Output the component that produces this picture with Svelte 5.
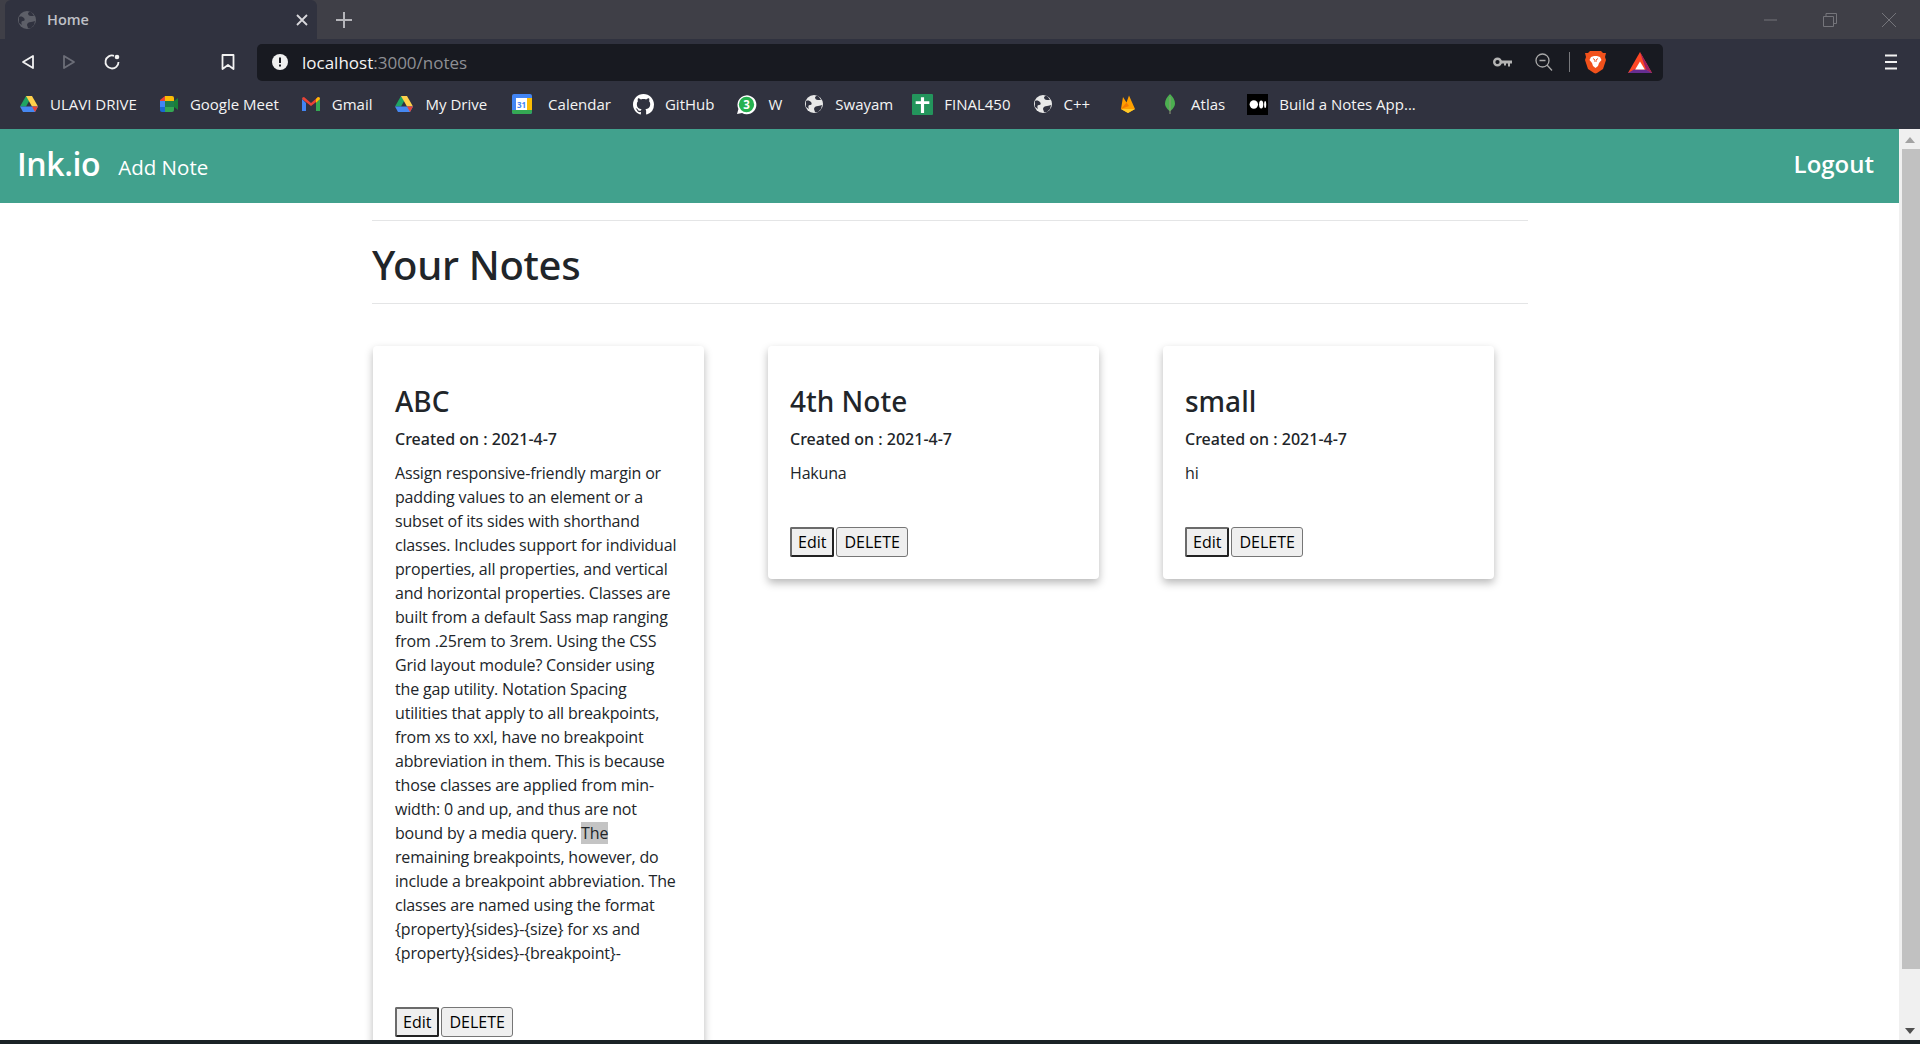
<script>
  const bookmarks = [
    { icon: 'drive', label: 'ULAVI DRIVE' },
    { icon: 'meet', label: 'Google Meet' },
    { icon: 'gmail', label: 'Gmail' },
    { icon: 'drive', label: 'My Drive' },
    { icon: 'calendar', label: 'Calendar' },
    { icon: 'github', label: 'GitHub' },
    { icon: 'whatsapp', label: 'W' },
    { icon: 'globe', label: 'Swayam' },
    { icon: 'sheet', label: 'FINAL450' },
    { icon: 'globe', label: 'C++' },
    { icon: 'firebase', label: '' },
    { icon: 'leaf', label: 'Atlas' },
    { icon: 'medium', label: 'Build a Notes App...' }
  ];

  const notes = [
    {
      title: 'ABC',
      lines: [
        'Assign responsive-friendly margin or',
        'padding values to an element or a',
        'subset of its sides with shorthand',
        'classes. Includes support for individual',
        'properties, all properties, and vertical',
        'and horizontal properties. Classes are',
        'built from a default Sass map ranging',
        'from .25rem to 3rem. Using the CSS',
        'Grid layout module? Consider using',
        'the gap utility. Notation Spacing',
        'utilities that apply to all breakpoints,',
        'from xs to xxl, have no breakpoint',
        'abbreviation in them. This is because',
        'those classes are applied from min-',
        'width: 0 and up, and thus are not',
        'bound by a media query. |The',
        'remaining breakpoints, however, do',
        'include a breakpoint abbreviation. The',
        'classes are named using the format',
        '{property}{sides}-{size} for xs and',
        '{property}{sides}-{breakpoint}-'
      ]
    },
    { title: '4th Note', lines: ['Hakuna'] },
    { title: 'small', lines: ['hi'] }
  ];
</script>

{#snippet globe()}
  <svg viewBox="0 0 20 20" width="20" height="20">
    <circle cx="10" cy="10" r="9" fill="currentColor" />
    <path d="M2 7c2-1 4 0 5 1s1 3-1 3-2 2-1 4l-3-2zM11 18l-1-3c0-2 2-3 4-3s3-1 4-1l-1 4-3 3zM11 3c0 2 1 3 3 3l3 0-2-3-2-1.500z" fill="#30323f" />
  </svg>
{/snippet}

{#snippet icon(name)}
  {#if name === 'drive'}
    <svg viewBox="0 0 20 20" width="20" height="20">
      <path d="M7 2h6l-6 10.500H1z" fill="#1fa463" />
      <path d="M7 2h6l6 10.500h-6z" fill="#ffd04b" />
      <path d="M1 12.500 4 18h12l3-5.500z" fill="#4688f1" />
      <path d="M13 12.500h6L16 18z" fill="#ea4335" />
    </svg>
  {:else if name === 'meet'}
    <svg viewBox="0 0 20 20" width="20" height="20">
      <path d="M1 6 6 2v5H1z" fill="#ea4335" />
      <path d="M1 7h5v6H1z" fill="#4285f4" />
      <path d="M1 13h5v5H3q-2 0-2-2z" fill="#1967d2" />
      <path d="M6 2h7q2 0 2 2v3H6z" fill="#fbbc04" />
      <path d="M6 13h9v3q0 2-2 2H6z" fill="#34a853" />
      <path d="M15 7v6l4 3V4z" fill="#188038" />
      <path d="M6 7h9v6H6z" fill="#1e7e4a" />
    </svg>
  {:else if name === 'gmail'}
    <svg viewBox="0 0 20 20" width="20" height="20">
      <path d="M1 5v12h4V9z" fill="#4285f4" />
      <path d="M15 9v8h4V5z" fill="#34a853" />
      <path d="M1 5q0-2 2-2l7 6 7-6q2 0 2 2l-9 7z" fill="#ea4335" />
      <path d="M15 5l2-2q2 0 2 2l-4 4z" fill="#fbbc04" />
    </svg>
  {:else if name === 'calendar'}
    <svg viewBox="0 0 20 20" width="20" height="20">
      <rect width="20" height="20" rx="2" fill="#4285f4" />
      <path d="M15 4h5v12h-5z" fill="#fbbc04" />
      <path d="M0 16h20v2q0 2-2 2H2q-2 0-2-2z" fill="#34a853" />
      <path d="M4 4h11v12H4z" fill="#fff" />
      <text x="9.500" y="13.500" class="cal-num">31</text>
    </svg>
  {:else if name === 'github'}
    <svg viewBox="0 0 16 16" width="21" height="21">
      <path fill="#fff" d="M8 0C3.580 0 0 3.580 0 8c0 3.540 2.290 6.530 5.470 7.590.4.070.55-.17.55-.38 0-.19-.01-.82-.01-1.490-2.010.37-2.530-.49-2.690-.94-.09-.23-.48-.94-.82-1.130-.28-.15-.68-.52-.01-.53.63-.01 1.080.58 1.230.82.720 1.210 1.870.870 2.330.660.070-.520.280-.870.510-1.070-1.780-.200-3.640-.890-3.640-3.950 0-.870.310-1.590.820-2.150-.080-.200-.360-1.020.080-2.120 0 0 .670-.210 2.200.820.640-.180 1.320-.270 2-.270s1.360.090 2 .270c1.530-1.040 2.200-.820 2.200-.820.440 1.100.160 1.920.080 2.120.510.560.820 1.270.820 2.150 0 3.070-1.870 3.750-3.650 3.950.290.250.540.730.540 1.480 0 1.070-.010 1.930-.010 2.200 0 .210.150.460.550.380A8.010 8.010 0 0 0 16 8c0-4.420-3.580-8-8-8z" />
    </svg>
  {:else if name === 'whatsapp'}
    <svg viewBox="0 0 20 20" width="21" height="21">
      <path d="M1 19l1.300-4.800A9 9 0 1 1 5.800 18z" fill="#fff" />
      <circle cx="10" cy="10" r="7.300" fill="#25b14f" />
      <text x="10" y="14" class="wa-num">3</text>
    </svg>
  {:else if name === 'globe'}
    {@render globe()}
  {:else if name === 'sheet'}
    <svg viewBox="0 0 20 20" width="21" height="21">
      <rect width="20" height="20" rx="1" fill="#23955c" />
      <path d="M8.500 3h3v4h5v2.500h-5V18h-3V9.500h-5V7h5z" fill="#fff" />
    </svg>
  {:else if name === 'firebase'}
    <svg viewBox="0 0 20 20" width="20" height="20">
      <path d="M3 15 5 3l3.500 5.500L11 1.500 17 15l-7 4z" fill="#ffa000" />
      <path d="M3 15 8.500 8.500 11 12l-8 3z" fill="#f57c00" />
      <path d="M3 15l14 0-7 4z" fill="#ffca28" />
    </svg>
  {:else if name === 'leaf'}
    <svg viewBox="0 0 20 20" width="20" height="20">
      <path d="M10 0c3 3 5 6 5 9.500 0 3.500-3 6-4.600 7.500h-.8C8 15.500 5 13 5 9.500 5 6 7 3 10 0z" fill="#4caf50" />
      <path d="M10 3v17" stroke="#8d9a7a" stroke-width="1" />
    </svg>
  {:else if name === 'medium'}
    <svg viewBox="0 0 20 20" width="21" height="21">
      <rect width="20" height="20" fill="#000" />
      <circle cx="6.500" cy="10" r="4" fill="#fff" />
      <ellipse cx="13.500" cy="10" rx="2" ry="3.800" fill="#fff" />
      <ellipse cx="17.300" cy="10" rx="1" ry="3.400" fill="#fff" />
    </svg>
  {/if}
{/snippet}

<div class="window">
  <div class="tabstrip">
    <div class="tab">
      <span class="tab-globe">{@render globe()}</span>
      <span class="tab-title">Home</span>
      <svg class="tab-close" viewBox="0 0 12 12" width="12" height="12">
        <path d="M1 1l10 10M11 1 1 11" stroke="#d8d8dc" stroke-width="1.800" />
      </svg>
    </div>
    <svg class="new-tab" viewBox="0 0 16 16" width="16" height="16">
      <path d="M8 0v16M0 8h16" stroke="#b5b5ba" stroke-width="2" />
    </svg>
    <div class="win-controls">
      <svg viewBox="0 0 14 14" width="14" height="14"><path d="M0 7h13" stroke="#75757b" stroke-width="1" /></svg>
      <svg viewBox="0 0 14 14" width="14" height="14" fill="none" stroke="#75757b"><path d="M.5 3.500h10v10H.5zM3 3.500V.5h10.500v10H10.500" /></svg>
      <svg viewBox="0 0 14 14" width="14" height="14"><path d="M0 0l14 14M14 0 0 14" stroke="#75757b" stroke-width="1" /></svg>
    </div>
  </div>

  <div class="toolbar">
    <div class="nav-btns">
      <svg viewBox="0 0 14 16" width="14" height="16"><path d="M12 2v12L2 8z" fill="none" stroke="#f2f2f2" stroke-width="1.800" stroke-linejoin="round" /></svg>
      <svg viewBox="0 0 14 16" width="14" height="16"><path d="M2 2v12l10-6z" fill="none" stroke="#6c6e78" stroke-width="1.800" stroke-linejoin="round" /></svg>
      <svg viewBox="0 0 18 18" width="18" height="18"><path d="M15.500 9A6.500 6.500 0 1 1 11 2.800" fill="none" stroke="#f2f2f2" stroke-width="1.800" /><circle cx="14" cy="4" r="2.300" fill="#f2f2f2" /></svg>
    </div>
    <svg class="bookmark-btn" viewBox="0 0 14 16" width="14" height="16"><path d="M1.500 1h11v14L7 11l-5.500 4z" fill="none" stroke="#f2f2f2" stroke-width="1.800" stroke-linejoin="round" /></svg>
    <div class="addressbar">
      <svg class="info" viewBox="0 0 16 16" width="16" height="16"><circle cx="8" cy="8" r="8" fill="#f0f0f0" /><path d="M8 3.500v5.500M8 10.500v2" stroke="#181a21" stroke-width="2" /></svg>
      <span class="url"><span class="host">localhost</span>:3000/notes</span>
      <div class="addr-right">
        <svg viewBox="0 0 20 12" width="20" height="12"><circle cx="4.500" cy="6" r="3.300" fill="none" stroke="#b4b4b4" stroke-width="2.400" /><path d="M8 4.500h11v3h-2v3h-2v-3h-2v2h-2v-2H8z" fill="#b4b4b4" /></svg>
        <svg class="zoom" viewBox="0 0 18 18" width="18" height="18"><circle cx="7.500" cy="7.500" r="6.500" fill="none" stroke="#a8a8a8" stroke-width="1.300" /><path d="M12 12l5 5.500M4.500 7.500h6" stroke="#a8a8a8" stroke-width="1.300" /></svg>
        <span class="addr-sep"></span>
        <svg class="brave" viewBox="0 0 21 24" width="21" height="24">
          <path d="M5 1h11l2 2 3 0-1 4 1 3-3 9-6 4-1.500.5L9 23 3 19 0 10l1-3-1-4 3 0z" fill="#f1511b" />
          <path d="M6 7l3-1h3l3 1 1.500 3-2.500 3-1 3-2.500 2L8 16l-1-3-2.500-3z" fill="#fff" />
          <path d="M9 11h3M8 8.500l2 1.500M13 8.500l-2 1.500" stroke="#f1511b" stroke-width="1" />
        </svg>
        <svg class="bat" viewBox="0 0 24 21" width="24" height="21">
          <path d="M12 0 24 21H0z" fill="#ff4724" />
          <path d="M12 0 24 21l-6-3.500z" fill="#9e1f63" />
          <path d="M0 21l6-3.500h12L24 21z" fill="#662d91" />
          <path d="M12 9.500l4.800 8H7.200z" fill="#fff" />
        </svg>
      </div>
    </div>
    <svg class="menu" viewBox="0 0 12 16" width="12" height="16"><path d="M0 1.500h12M0 8h12M0 14.500h12" stroke="#f2f2f2" stroke-width="2" /></svg>
  </div>

  <div class="bookmarks">
    {#each bookmarks as b}
      <div class="bm">
        <span
          class="bm-icon"
          class:light={b.icon === 'globe'}
          class:wide={b.icon === 'calendar'}
          class:sheet={b.icon === 'sheet'}
          class:fire={b.icon === 'firebase'}
        >{@render icon(b.icon)}</span>
        {#if b.label}<span class="bm-label">{b.label}</span>{/if}
      </div>
    {/each}
  </div>

  <div class="viewport">
    <div class="page">
      <nav class="navbar">
        <a class="brand" href="/">Ink.io</a>
        <a class="nav-link" href="/notes/add">Add Note</a>
        <a class="logout" href="/logout">Logout</a>
      </nav>
      <main class="container">
        <hr />
        <h1>Your Notes</h1>
        <hr />
        <div class="cards">
          {#each notes as note}
            <article class="card">
              <h2>{note.title}</h2>
              <h6>Created on : 2021-4-7</h6>
              <p>
                {#each note.lines as line}
                  <span class="line">
                    {#if line.includes('|')}
                      {line.split('|')[0]}<mark>{line.split('|')[1]}</mark>
                    {:else}
                      {line}
                    {/if}
                  </span>
                {/each}
              </p>
              <div class="actions">
                <button class="focused">Edit</button>
                <button>DELETE</button>
              </div>
            </article>
          {/each}
        </div>
      </main>
    </div>
    <div class="scrollbar">
      <svg viewBox="0 0 10 6" width="10" height="6"><path d="M0 6 5 0l5 6z" fill="#a3a3a3" /></svg>
      <div class="track"><div class="thumb"></div></div>
      <svg viewBox="0 0 10 6" width="10" height="6"><path d="M0 0l5 6 5-6z" fill="#505050" /></svg>
    </div>
  </div>
  <div class="taskbar"></div>
</div>

<style>
  :global(body) {
    margin: 0;
    font-family: "Open Sans", "Noto Sans", sans-serif;
    background: #fff;
  }

  .window {
    height: 1044px;
    display: flex;
    flex-direction: column;
    overflow: hidden;
  }

  /* tab strip */
  .tabstrip {
    height: 39px;
    flex: none;
    background: #3f3f47;
    display: flex;
    align-items: center;
    padding-left: 5px;
  }

  .tab {
    width: 312px;
    height: 39px;
    box-sizing: border-box;
    background: #30323f;
    border-radius: 6px 6px 0 0;
    display: flex;
    align-items: center;
    padding: 0 9px 0 12px;
    color: #bfc0c6;
  }

  .tab-globe {
    display: flex;
    color: #5d5f68;
  }

  .tab-title {
    margin-left: 10px;
    font-size: 14.500px;
    font-weight: 600;
    flex: 1;
  }

  .new-tab {
    margin-left: 19px;
  }

  .win-controls {
    margin-left: auto;
    display: flex;
    gap: 45px;
    padding-right: 24px;
  }

  /* toolbar */
  .toolbar {
    height: 46px;
    flex: none;
    background: #30323f;
    display: flex;
    align-items: center;
  }

  .nav-btns {
    display: flex;
    align-items: center;
    gap: 27px;
    padding-left: 21px;
  }

  .bookmark-btn {
    margin-left: 100px;
  }

  .addressbar {
    margin-left: 22px;
    width: 1406px;
    height: 37px;
    background: #181a21;
    border-radius: 5px;
    display: flex;
    align-items: center;
    padding: 0 11px 0 15px;
    box-sizing: border-box;
  }

  .url {
    margin-left: 14px;
    font-size: 17px;
    color: #8e8f94;
  }

  .host {
    color: #f4f4f4;
  }

  .addr-right {
    margin-left: auto;
    display: flex;
    align-items: center;
  }

  .zoom {
    margin-left: 22px;
  }

  .addr-sep {
    width: 1px;
    height: 20px;
    background: #77787c;
    margin-left: 16px;
  }

  .brave {
    margin-left: 15px;
  }

  .bat {
    margin-left: 22px;
  }

  .menu {
    margin-left: 222px;
  }

  /* bookmarks bar */
  .bookmarks {
    height: 44px;
    flex: none;
    box-sizing: border-box;
    padding: 0 0 6px 19px;
    background: #30323f;
    display: flex;
    align-items: center;
    gap: 22px;
    color: #f4f4f4;
    font-size: 15px;
  }

  .bm {
    display: flex;
    align-items: center;
    gap: 11px;
  }

  .bm-icon {
    display: flex;
  }

  .bm-icon.light {
    color: #e8e8e8;
  }

  .bm-icon.wide {
    margin: 0 5px 0 3px;
  }

  .bm-icon.sheet {
    margin-left: -3px;
  }

  .bm-icon.fire {
    margin-left: 6px;
  }

  .bm-label {
    white-space: nowrap;
  }

  .cal-num {
    font-size: 8px;
    font-weight: 700;
    fill: #4285f4;
    text-anchor: middle;
  }

  .wa-num {
    font-size: 11px;
    font-weight: 700;
    fill: #fff;
    text-anchor: middle;
  }

  /* page */
  .viewport {
    flex: 1;
    min-height: 0;
    display: flex;
  }

  .page {
    flex: 1;
    min-width: 0;
    overflow: hidden;
    color: #212529;
  }

  .navbar {
    height: 74px;
    background: #41a18d;
    display: flex;
    align-items: center;
    padding: 0 25px 0 17px;
  }

  .navbar a {
    color: #fff;
    text-decoration: none;
  }

  .brand {
    margin-top: -6px;
    font-size: 32px;
    font-weight: 600;
    letter-spacing: -0.4px;
  }

  .nav-link {
    margin-left: 18px;
    padding-top: 1px;
    font-size: 20.500px;
  }

  .logout {
    margin-left: auto;
    margin-top: -6px;
    font-size: 24px;
    font-weight: 600;
  }

  .container {
    width: 1156px;
    margin-left: 372px;
    padding-top: 17px;
  }

  hr {
    margin: 0;
    border: 0;
    border-top: 1px solid #e4e5e6;
  }

  h1 {
    margin: 0;
    height: 82px;
    line-height: 88px;
    font-family: "Noto Sans", sans-serif;
    font-size: 40px;
    font-weight: 500;
    letter-spacing: -0.3px;
  }

  .cards {
    margin-top: 42px;
    display: flex;
    align-items: flex-start;
    gap: 64px;
    padding-left: 1px;
  }

  .card {
    width: 331px;
    flex: none;
    box-sizing: border-box;
    padding: 38px 22px 22px;
    border-radius: 4px;
    box-shadow: 0 4px 8px rgba(0, 0, 0, 0.28);
    background: #fff;
  }

  h2 {
    margin: 0;
    font-family: "Noto Sans", sans-serif;
    font-size: 28px;
    line-height: 34px;
    font-weight: 500;
  }

  h6 {
    margin: 9px 0 0;
    font-family: "Noto Sans", sans-serif;
    font-size: 16px;
    line-height: 24px;
    font-weight: 500;
  }

  p {
    margin: 10px 0 0;
    font-size: 16px;
    line-height: 24px;
    letter-spacing: -0.17px;
  }

  .line {
    display: block;
    white-space: nowrap;
  }

  mark {
    background: #c4c4c4;
    color: inherit;
  }

  .actions {
    margin-top: 42px;
    display: flex;
    gap: 2px;
  }

  button {
    height: 30px;
    padding: 0 7px;
    background: #efefef;
    border: 1px solid #767676;
    border-radius: 3px;
    font-family: inherit;
    font-size: 16px;
    color: #000;
  }

  button.focused {
    border: 2px solid #222;
    border-radius: 2px;
    border-top-color: #6b6b6b;
    border-left-color: #6b6b6b;
    padding: 0 6px;
  }

  .scrollbar {
    width: 21px;
    flex: none;
    background: #f0f0f0;
    display: flex;
    flex-direction: column;
    align-items: center;
    justify-content: space-between;
    padding: 8px 0 6px;
    box-sizing: border-box;
  }

  .track {
    flex: 1;
    width: 18px;
    padding: 6px 0 0;
    margin-left: 2px;
  }

  .thumb {
    height: 820px;
    background: #c1c1c1;
  }

  .taskbar {
    height: 4px;
    flex: none;
    background: #1a2226;
  }
</style>
